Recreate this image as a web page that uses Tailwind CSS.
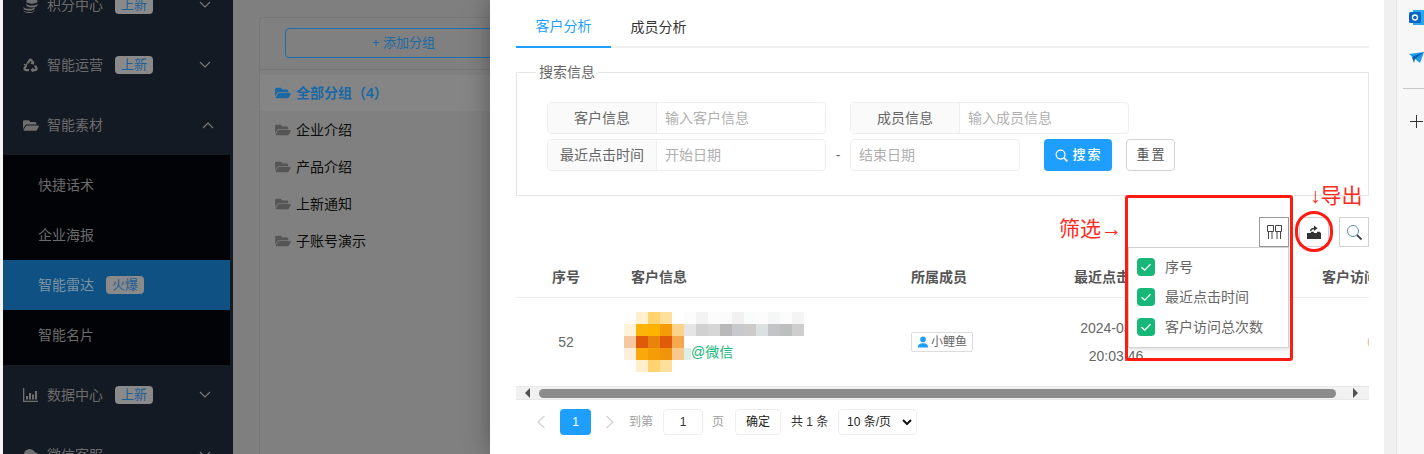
<!DOCTYPE html>
<html lang="zh">
<head>
<meta charset="utf-8">
<title>智能雷达</title>
<script src="https://cdn.jsdelivr.net/npm/@tailwindcss/browser@4"></script>
</head>
<body class="m-0 overflow-hidden bg-white">
<svg class="hidden" width="0" height="0">
  <symbol id="folder" viewBox="0 0 576 512"><path fill="currentColor" d="M572.694 292.093L500.27 416.248A63.997 63.997 0 0 1 444.989 448H45.025c-18.523 0-30.064-20.093-20.731-36.093l72.424-124.155A64 64 0 0 1 152 256h399.964c18.523 0 30.064 20.093 20.73 36.093zM152 224h328v-48c0-26.51-21.49-48-48-48H272l-64-64H48C21.49 64 0 85.49 0 112v278.046l69.077-118.418C86.214 242.25 117.989 224 152 224z"/></symbol>
  <symbol id="chev-d" viewBox="0 0 12 8"><path d="M1 1l5 5 5-5" fill="none" stroke="currentColor" stroke-width="1.1"/></symbol>
  <symbol id="chev-u" viewBox="0 0 12 8"><path d="M1 7l5-5 5 5" fill="none" stroke="currentColor" stroke-width="1.1"/></symbol>
  <symbol id="check" viewBox="0 0 18 18"><path d="M4.5 9.2l3.2 3 5.8-6" fill="none" stroke="#fff" stroke-width="1.3"/></symbol>
</svg>
<div class="relative flex h-[454px] w-[1424px] overflow-hidden font-['Liberation_Sans','Noto_Sans_CJK_SC',sans-serif] text-sm">

  <!-- left strip + sidebar -->
  <div class="h-full w-[3px] shrink-0 bg-[#f4f4f4]"></div>
  <aside class="h-full w-[230px] shrink-0 bg-[#141a23] text-[#6b6b6b]">
    <div class="-mt-[25px]">
      <div class="flex h-[60px] items-center pl-5 pr-[22px]">
        <svg class="mr-[9px] h-[15px] w-[15px]" viewBox="0 0 16 16" fill="#6f6f6f"><ellipse cx="9.5" cy="3.5" rx="6" ry="2.5"/><path d="M3.5 5.5c0 1.4 2.7 2.5 6 2.5s6-1.1 6-2.5v2c0 1.4-2.7 2.5-6 2.5s-6-1.1-6-2.5z"/><path d="M.5 9c0 1.4 2.7 2.5 6 2.5s6-1.1 6-2.5v2c0 1.4-2.7 2.5-6 2.5S.5 12.4.5 11z"/><path d="M.5 12.5c0 1.4 2.7 2.5 6 2.5s6-1.1 6-2.5V13c0 1.4-2.7 3-6 3s-6-1.600-6-3z"/></svg>
        <span class="w-[68px]">积分中心</span>
        <span class="flex h-[18px] w-[38px] items-center justify-center rounded-sm bg-[#8a8a8a] text-[13px] text-[#1d5f96]">上新</span>
        <svg class="ml-auto h-2 w-3 text-[#7a7a7a]"><use href="#chev-d"/></svg>
      </div>
      <div class="flex h-[60px] items-center pl-5 pr-[22px]">
        <svg class="mr-[9px] h-[15px] w-[15px]" viewBox="0 0 16 16" fill="none" stroke="#707070" stroke-width="2.4"><path d="M5.2 5.5L7 2.4c.5-.9 1.5-.9 2 0l1.800 3.100"/><path d="M12.800 8l1.500 2.800c.5 1-.1 2-1.200 2H9.500"/><path d="M6.500 12.800H3c-1.100 0-1.700-1-1.200-2L3.300 8"/><path d="M11.500 3.500l-.5 2.800-2.700-.8M11 14.800l-2.200-2 2.200-2M1 6.800l2.700 1 .8-2.700" stroke-width="1.300"/></svg>
        <span class="w-[68px]">智能运营</span>
        <span class="flex h-[18px] w-[38px] items-center justify-center rounded-sm bg-[#8a8a8a] text-[13px] text-[#1d5f96]">上新</span>
        <svg class="ml-auto h-2 w-3 text-[#7a7a7a]"><use href="#chev-d"/></svg>
      </div>
      <div class="flex h-[60px] items-center pl-5 pr-[19px]">
        <svg class="mr-[8px] h-[15px] w-4 text-[#6f6f6f]"><use href="#folder"/></svg>
        <span>智能素材</span>
        <svg class="ml-auto h-2 w-3 text-[#7a7a7a]"><use href="#chev-u"/></svg>
      </div>
      <div class="w-[227px] bg-[#020306] py-[5px]">
        <div class="flex h-[50px] items-center pl-[35px]">快捷话术</div>
        <div class="flex h-[50px] items-center pl-[35px]">企业海报</div>
        <div class="flex h-[50px] items-center bg-[#0e5182] pl-[35px] text-[#7d93a3]">智能雷达
          <span class="ml-[12px] flex h-[18px] w-[38px] items-center justify-center rounded-sm bg-[#8a8a8a] text-[13px] text-[#1d5f96]">火爆</span>
        </div>
        <div class="flex h-[50px] items-center pl-[35px]">智能名片</div>
      </div>
      <div class="flex h-[60px] items-center pl-5 pr-[22px]">
        <svg class="mr-[9px] h-[14px] w-[15px]" viewBox="0 0 15 14" fill="#6f6f6f"><path d="M0 0h1.300v12.700H15V14H0z"/><path d="M3 8h2v3.500H3zM6 5h2v6.500H6zM9 6.500h2v5H9zM12 3h2v8.500h-2z"/></svg>
        <span class="w-[68px]">数据中心</span>
        <span class="flex h-[18px] w-[38px] items-center justify-center rounded-sm bg-[#8a8a8a] text-[13px] text-[#1d5f96]">上新</span>
        <svg class="ml-auto h-2 w-3 text-[#7a7a7a]"><use href="#chev-d"/></svg>
      </div>
      <div class="flex h-[60px] items-center pl-5 pr-[22px]">
        <svg class="mr-[9px] h-[15px] w-[15px]" viewBox="0 0 16 16" fill="#6f6f6f"><circle cx="7" cy="7" r="6"/><path d="M12 4l4 2-3 3z"/></svg>
        <span>微信客服</span>
        <svg class="ml-auto h-2 w-3 text-[#7a7a7a]"><use href="#chev-d"/></svg>
      </div>
    </div>
  </aside>

  <!-- dimmed page -->
  <main class="h-full w-[257px] shrink-0 bg-[#7f7f7f] pl-[26px] pt-[17px]">
    <div class="h-[460px] w-[300px] rounded-tl-sm border border-[#777777] bg-[#808080]">
      <div class="h-[52px] border-b border-[#767676] pl-[25px] pt-[10px]">
        <div class="flex h-[30px] w-[240px] items-center justify-center rounded-sm border border-[#1a6fb0] pr-[3px] text-[13px] text-[#1f6aa5]">+ 添加分组</div>
      </div>
      <div class="mt-[5px] flex h-[36px] items-center bg-[#858585] pl-[15px] font-bold text-[#1a69a6]">
        <svg class="mr-[5px] h-[14px] w-4"><use href="#folder"/></svg>全部分组（4）
      </div>
      <div class="flex h-[37px] items-center pl-[15px] text-[#0c0c0c]"><svg class="mr-[5px] h-[14px] w-4 text-[#555555]"><use href="#folder"/></svg>企业介绍</div>
      <div class="flex h-[37px] items-center pl-[15px] text-[#0c0c0c]"><svg class="mr-[5px] h-[14px] w-4 text-[#555555]"><use href="#folder"/></svg>产品介绍</div>
      <div class="flex h-[37px] items-center pl-[15px] text-[#0c0c0c]"><svg class="mr-[5px] h-[14px] w-4 text-[#555555]"><use href="#folder"/></svg>上新通知</div>
      <div class="flex h-[37px] items-center pl-[15px] text-[#0c0c0c]"><svg class="mr-[5px] h-[14px] w-4 text-[#555555]"><use href="#folder"/></svg>子账号演示</div>
    </div>
  </main>

  <!-- drawer -->
  <section class="relative z-10 h-full w-[894px] shrink-0 bg-white pl-[26px] pr-[15px] text-[#666666] shadow-[0_0_24px_rgba(0,0,0,0.35)]">
    <div class="flex h-[48px] border-b-2 border-[#f0f0f0]">
      <div class="-mb-[2px] flex h-[48px] w-[95px] items-center justify-center border-b-2 border-[#1e9fff] pt-[6px] text-[#1e9fff]">客户分析</div>
      <div class="flex h-[46px] w-[95px] items-center justify-center pt-[8px] text-[#333333]">成员分析</div>
    </div>

    <fieldset class="mt-[14px] h-[134px] border border-[#e6e6e6] pt-[20px]">
      <legend class="ml-[19px] px-[3px] leading-5">搜索信息</legend>
      <div class="pl-[30px]">
        <div class="flex gap-[24px]">
          <div class="flex h-8 w-[279px] rounded-sm border border-[#eeeeee]">
            <div class="flex w-[109px] items-center justify-center border-r border-[#eeeeee] bg-[#fafafa]">客户信息</div>
            <div class="flex flex-1 items-center pl-2 text-[#b0b0b0]">输入客户信息</div>
          </div>
          <div class="flex h-8 w-[279px] rounded-sm border border-[#eeeeee]">
            <div class="flex w-[109px] items-center justify-center border-r border-[#eeeeee] bg-[#fafafa]">成员信息</div>
            <div class="flex flex-1 items-center pl-2 text-[#b0b0b0]">输入成员信息</div>
          </div>
        </div>
        <div class="mt-[5px] flex items-center">
          <div class="flex h-8 w-[279px] rounded-sm border border-[#eeeeee]">
            <div class="flex w-[109px] items-center justify-center border-r border-[#eeeeee] bg-[#fafafa]">最近点击时间</div>
            <div class="flex flex-1 items-center pl-2 text-[#b0b0b0]">开始日期</div>
          </div>
          <div class="w-[24px] text-center">-</div>
          <div class="flex h-8 w-[170px] items-center rounded-sm border border-[#eeeeee] pl-2 text-[#b0b0b0]">结束日期</div>
          <div class="ml-[24px] flex h-8 w-[68px] items-center justify-center gap-1 rounded-sm bg-[#1e9fff] pl-[2px] text-[13px] font-medium tracking-[2px] text-white">
            <svg class="h-[13px] w-[13px]" viewBox="0 0 14 14" fill="none" stroke="#fff" stroke-width="1.3"><circle cx="6" cy="6" r="4.8"/><path d="M9.5 9.5l3.8 3.8" stroke-width="2"/></svg>搜索
          </div>
          <div class="ml-[14px] flex h-8 w-[49px] items-center justify-center rounded-sm border border-[#d2d2d2] pl-[2px] text-[13px] tracking-[2px] text-[#555555]">重置</div>
        </div>
      </div>
    </fieldset>

    <div class="relative z-20 mt-[21px] flex h-[30px] justify-end gap-[10px]">
      <div class="relative flex h-[30px] w-[30px] items-center justify-center border border-[#999999] bg-white">
        <svg class="h-[14px] w-[15px]" viewBox="0 0 15 14" fill="none" stroke="#444444" stroke-width="1"><path d="M.5.500h6v6h-6zM8.500.500h6v6h-6z"/><path d="M1.500 7v7M5 7v7M10 7v7M13.500 7v7"/></svg>
        <div class="absolute -right-px top-[29px] h-[101px] w-[161px] border border-[#d2d2d2] bg-white py-[10px] pl-[8px] shadow-[0_2px_4px_rgba(0,0,0,0.12)]">
          <div class="flex h-[30px] items-start gap-[10px] leading-[18px]"><svg class="h-[18px] w-[18px] rounded-sm bg-[#16b777]"><use href="#check"/></svg>序号</div>
          <div class="flex h-[30px] items-start gap-[10px] leading-[18px]"><svg class="h-[18px] w-[18px] rounded-sm bg-[#16b777]"><use href="#check"/></svg>最近点击时间</div>
          <div class="flex h-[30px] items-start gap-[10px] leading-[18px]"><svg class="h-[18px] w-[18px] rounded-sm bg-[#16b777]"><use href="#check"/></svg>客户访问总次数</div>
        </div>
      </div>
      <div class="flex h-[30px] w-[30px] items-center justify-center border border-[#d2d2d2]">
        <svg class="h-[14px] w-[14px]" viewBox="0 0 14 14" fill="#333333"><path d="M0 8h3.500l1-1.200H7v1.200h3V6.800h2.500L14 8v6H0z"/><path d="M3 6.200C3.200 3.800 5 2.800 7 2.800V.5l3.500 2.700L7 6V4.300C5.500 4.300 4.600 5 4.300 6.200z"/></svg>
      </div>
      <div class="flex h-[30px] w-[30px] items-center justify-center border border-[#d2d2d2]">
        <svg class="h-[17px] w-[17px]" viewBox="0 0 17 17" fill="none" stroke="#444444" stroke-width="1"><circle cx="7" cy="7" r="5.500" stroke="#5a8fb5"/><path d="M11 11l4.500 4.500" stroke-width="1.800"/></svg>
      </div>
    </div>

    <div class="mt-[11px] h-[128px] overflow-hidden">
      <table class="w-[1053px] table-fixed border-collapse">
        <colgroup><col class="w-[100px]"><col class="w-[280px]"><col class="w-[163px]"><col class="w-[114px]"><col class="w-[396px]"></colgroup>
        <thead>
          <tr class="h-[39px] border-b border-[#eeeeee] font-bold text-[#555555]">
            <th class="text-center font-bold">序号</th>
            <th class="pl-[15px] text-left font-bold">客户信息</th>
            <th class="pl-[15px] text-left font-bold">所属成员</th>
            <th class="whitespace-nowrap text-center font-bold">最近点击时间</th>
            <th class="text-center font-bold">客户访问总次数</th>
          </tr>
        </thead>
        <tbody>
          <tr class="h-[89px]">
            <td class="text-center">52</td>
            <td class="pl-[8px]">
              <div class="relative h-[60px] w-[182px]">
                <svg class="block" width="182" height="60" viewBox="0 0 182 60" shape-rendering="crispEdges">
                  <rect x="12" y="0" width="12" height="12" fill="#fff0cf"/><rect x="24" y="0" width="12" height="12" fill="#fed36f"/><rect x="36" y="0" width="12" height="12" fill="#fee09c"/>
                  <rect x="0" y="12" width="12" height="12" fill="#fff3da"/><rect x="12" y="12" width="12" height="12" fill="#fdb40a"/><rect x="24" y="12" width="12" height="12" fill="#fdb300"/><rect x="36" y="12" width="12" height="12" fill="#f59b07"/><rect x="48" y="12" width="12" height="12" fill="#fbd28b"/>
                  <rect x="0" y="24" width="12" height="12" fill="#f6c8a0"/><rect x="12" y="24" width="12" height="12" fill="#e05a0a"/><rect x="24" y="24" width="12" height="12" fill="#e8830c"/><rect x="36" y="24" width="12" height="12" fill="#e05a0a"/><rect x="48" y="24" width="12" height="12" fill="#f5a84e"/>
                  <rect x="0" y="36" width="12" height="12" fill="#fdefdc"/><rect x="12" y="36" width="12" height="12" fill="#faa90c"/><rect x="24" y="36" width="12" height="12" fill="#f59d07"/><rect x="36" y="36" width="12" height="12" fill="#f2940b"/><rect x="48" y="36" width="12" height="12" fill="#f9c88e"/><rect x="60" y="36" width="7" height="12" fill="#dcf0e6"/>
                  <rect x="12" y="48" width="12" height="12" fill="#ffefcc"/><rect x="24" y="48" width="12" height="12" fill="#fed36f"/><rect x="36" y="48" width="12" height="12" fill="#fee09c"/>
                  <rect x="60" y="0" width="12" height="12" fill="#fcfcfc"/><rect x="72" y="0" width="12" height="12" fill="#f3f3f3"/><rect x="84" y="0" width="12" height="12" fill="#fcfcfc"/><rect x="96" y="0" width="12" height="12" fill="#fbfbfb"/><rect x="108" y="0" width="12" height="12" fill="#f1f1f1"/><rect x="120" y="0" width="12" height="12" fill="#fafbfb"/><rect x="132" y="0" width="12" height="12" fill="#fcfcfc"/><rect x="144" y="0" width="12" height="12" fill="#f5f7f7"/><rect x="156" y="0" width="12" height="12" fill="#fcfcfc"/><rect x="168" y="0" width="12" height="12" fill="#f4f4f4"/>
                  <rect x="60" y="12" width="12" height="12" fill="#e5e5e5"/><rect x="72" y="12" width="12" height="12" fill="#d1d1d1"/><rect x="84" y="12" width="12" height="12" fill="#d6d6d6"/><rect x="96" y="12" width="12" height="12" fill="#b9b9b9"/><rect x="108" y="12" width="12" height="12" fill="#c8c9cc"/><rect x="120" y="12" width="12" height="12" fill="#cccbca"/><rect x="132" y="12" width="12" height="12" fill="#dde0e0"/><rect x="144" y="12" width="12" height="12" fill="#c3c4c5"/><rect x="156" y="12" width="12" height="12" fill="#bdbfbe"/><rect x="168" y="12" width="12" height="12" fill="#cecece"/>
                </svg>
                <span class="absolute left-[67px] top-[30px] leading-5 text-[#16b777]">@微信</span>
              </div>
            </td>
            <td class="pl-[15px]">
              <span class="flex h-[20px] w-[62px] items-center justify-center gap-[2px] rounded-[2px] border border-[#dddddd] text-xs leading-none">
                <svg class="h-[12px] w-[12px]" viewBox="0 0 14 14" fill="#1e9fff"><circle cx="7" cy="4" r="3.3"/><path d="M1 13.5c0-3.5 2.5-5 6-5s6 1.500 6 5z"/></svg>小鲤鱼
              </span>
            </td>
            <td class="whitespace-nowrap text-center leading-[28px]">2024-03-12<br>20:03:46</td>
            <td class="text-center text-[#eab8ae]">6</td>
          </tr>
        </tbody>
      </table>
    </div>

    <!-- horizontal scrollbar -->
    <div class="flex h-[14px] items-center border-y border-[#e8e8e8] bg-[#f1f1f1]">
      <svg class="ml-[9px] h-[10px] w-[5px]" viewBox="0 0 5 10" fill="#505050"><path d="M5 0v10L0 5z"/></svg>
      <div class="ml-[9px] h-[9px] w-[797px] rounded-full bg-[#8c8c8c]"></div>
      <svg class="ml-[17px] h-[10px] w-[5px]" viewBox="0 0 5 10" fill="#505050"><path d="M0 0v10l5-5z"/></svg>
    </div>

    <!-- pagination -->
    <div class="mt-[9px] flex h-[26px] items-center text-xs">
      <svg class="ml-[20px] h-[14px] w-[10px]" viewBox="0 0 10 14" fill="none" stroke="#d2d2d2" stroke-width="1.3"><path d="M8.5 1L2 7l6.5 6"/></svg>
      <div class="ml-[14px] flex h-[26px] w-[31px] items-center justify-center rounded-sm bg-[#1e9fff] text-white">1</div>
      <svg class="ml-[14px] h-[14px] w-[10px]" viewBox="0 0 10 14" fill="none" stroke="#d2d2d2" stroke-width="1.3"><path d="M1.5 1L8 7l-6.500 6"/></svg>
      <span class="ml-[14px] text-[#a0a0a0]">到第</span>
      <div class="ml-[10px] flex h-[26px] w-[40px] items-center justify-center rounded-sm border border-[#eeeeee] text-[#333333]">1</div>
      <span class="ml-[9px] text-[#a0a0a0]">页</span>
      <div class="ml-[11px] flex h-[26px] w-[46px] items-center justify-center rounded-sm border border-[#eeeeee] text-[#222222]">确定</div>
      <span class="ml-[10px] w-[38px] text-[#333333]">共 1 条</span>
      <div class="ml-[9px] flex h-[26px] w-[79px] items-center justify-between rounded-sm border border-[#eeeeee] pl-2 pr-[4px] text-[#222222]">10 条/页
        <svg class="h-[6px] w-[10px]" viewBox="0 0 10 6" fill="none" stroke="#111111" stroke-width="2"><path d="M1 1l4 4 4-4"/></svg>
      </div>
    </div>
  </section>

  <!-- browser side rail -->
  <div class="z-10 flex h-full w-[12px] shrink-0 bg-[#f0f0f0]"></div>
  <div class="z-10 flex h-full w-[28px] shrink-0 flex-col items-end border-l border-[#e4e4e4] bg-[#f7f7f7]">
    <svg class="mt-[10px] h-[15px] w-[15px]" viewBox="0 0 15 15"><rect x="4" y="0" width="12" height="15" fill="#28a8ea"/><rect x="0" y="2" width="12" height="11" rx="1.5" fill="#0a64c4"/><circle cx="6" cy="7.5" r="2.5" fill="none" stroke="#fff" stroke-width="1.3"/></svg>
    <svg class="mt-[27px] h-[11px] w-[15px]" viewBox="0 0 15 11"><path d="M0 2L15 0 11 11 6 7z" fill="#1e9ae8"/><path d="M15 0L6 7l-1 4-2-6z" fill="#0a5fb0"/></svg>
    <div class="mt-[25px] h-px w-[21px] bg-[#c8c8c8]"></div>
    <svg class="mr-[1px] mt-[26px] h-[13px] w-[13px]" viewBox="0 0 13 13" stroke="#333333" stroke-width="1"><path d="M6.5 0v13M0 6.5h13"/></svg>
  </div>

  <!-- hand-drawn annotations over the screenshot -->
  <div class="absolute left-[1125px] top-[195px] z-30 h-[166px] w-[168px] rounded-[3px] border-[3px] border-[#ff1a12]"></div>
  <div class="absolute left-[1295px] top-[211px] z-30 h-[41px] w-[38px] rounded-full border-[3px] border-[#ff1a12]"></div>
  <div class="absolute left-[1059px] top-[215px] z-30 whitespace-nowrap text-[21px] leading-7 text-[#ff2a20]">筛选→</div>
  <div class="absolute left-[1310px] top-[182px] z-30 whitespace-nowrap text-[21px] leading-7 text-[#ff2a20]">↓导出</div>
</div>
</body>
</html>
